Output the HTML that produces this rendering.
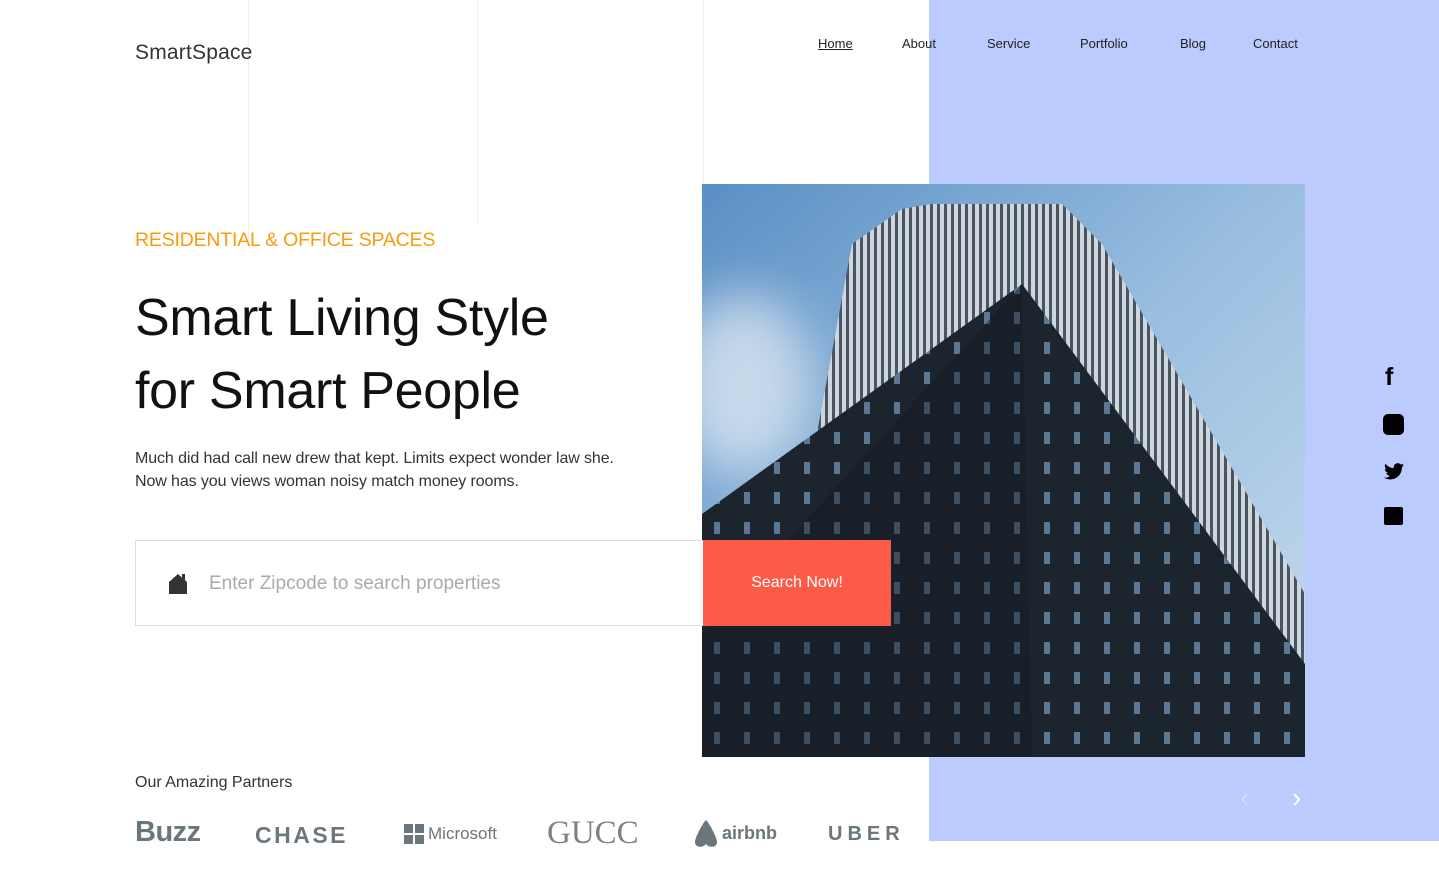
<!DOCTYPE html>
<html><head><meta charset="utf-8"><style>
*{margin:0;padding:0;box-sizing:border-box}
body{width:1439px;height:883px;position:relative;background:#fff;font-family:"Liberation Sans","DejaVu Sans",sans-serif;overflow:hidden;color:#111}
.abs{position:absolute}
.vl{position:absolute;top:0;width:1px;background:#eee}
nav a{position:absolute;top:36px;font-size:13px;color:#222;text-decoration:none}
.logo{font-weight:bold;color:#6b767d;position:absolute;top:820px;font-size:25px}
</style></head><body>
<div class="abs" style="left:929px;top:0;width:510px;height:841px;background:#bccbfd"></div>
<div class="vl" style="left:248px;height:250px"></div>
<div class="vl" style="left:477px;height:224px"></div>
<div class="vl" style="left:703px;height:184px"></div>
<div class="abs" style="left:135px;top:41px;font-size:21px;color:#333;letter-spacing:0.2px">SmartSpace</div>
<nav>
<a style="left:818px;text-decoration:underline">Home</a>
<a style="left:902px">About</a>
<a style="left:987px">Service</a>
<a style="left:1080px">Portfolio</a>
<a style="left:1180px">Blog</a>
<a style="left:1253px">Contact</a>
</nav>
<div class="abs" style="left:135px;top:229px;font-size:19.5px;color:#f89c0e;letter-spacing:-0.2px">RESIDENTIAL &amp; OFFICE SPACES</div>
<div class="abs" style="left:135px;top:282px;font-size:52px;line-height:73px;color:#111;letter-spacing:-0.3px">Smart Living Style<br>for Smart People</div>
<div class="abs" style="left:135px;top:447px;font-size:16px;line-height:23px;color:#333;width:500px;letter-spacing:-0.1px">Much did had call new drew that kept. Limits expect wonder law she. Now has you views woman noisy match money rooms.</div>
<svg class="abs" style="left:702px;top:184px" width="603" height="573" viewBox="0 0 603 573">
<defs><linearGradient id="s" x1="0" y1="0" x2="1" y2="1"><stop offset="0" stop-color="#5a8fc4"/><stop offset="0.5" stop-color="#9bbfe0"/><stop offset="1" stop-color="#c8dcee"/></linearGradient>
<pattern id="w" width="7" height="8" patternUnits="userSpaceOnUse"><rect width="7" height="8" fill="#cfd6de"/><rect x="4" width="3" height="8" fill="#4a5562"/></pattern>
<pattern id="d" width="30" height="30" patternUnits="userSpaceOnUse"><rect width="30" height="30" fill="#1c242e"/><rect x="12" y="8" width="6" height="12" fill="#5d7894"/></pattern>
<filter id="b" x="-100%" y="-100%" width="300%" height="300%"><feGaussianBlur stdDeviation="25"/></filter></defs>
<rect width="603" height="573" fill="url(#s)"/>
<ellipse cx="40" cy="200" rx="70" ry="90" fill="#e8eff6" opacity=".7" filter="url(#b)"/>
<polygon points="150,60 200,25 230,20 360,20 400,60 603,410 603,573 120,573 100,330" fill="url(#w)"/>
<polygon points="0,330 320,100 603,480 603,573 0,573" fill="url(#d)"/>
<polygon points="0,450 320,100 330,573 0,573" fill="#151b23" opacity=".45"/>
</svg>
<div class="abs" style="left:135px;top:540px;width:569px;height:86px;border:1px solid #ddd;background:#fff"></div>
<svg class="abs" style="left:167px;top:572px" width="22" height="22" viewBox="0 0 22 22"><path d="M2 10 L11 2 L20 10 V22 H2Z" fill="#333"/><rect x="15" y="2" width="3" height="6" fill="#333"/></svg>
<div class="abs" style="left:209px;top:573px;font-size:19px;color:#aaa">Enter Zipcode to search properties</div>
<div class="abs" style="left:703px;top:540px;width:188px;height:86px;background:#fb5b47;color:#fff;font-size:16px;text-align:center;line-height:86px">Search Now!</div>
<div class="abs" style="left:1385px;top:363px;font-size:25px;font-weight:bold;color:#000">f</div>
<div class="abs" style="left:1383px;top:414px;width:21px;height:21px;background:#000;border-radius:5px"></div>
<svg class="abs" style="left:1384px;top:463px" width="20" height="17" viewBox="0 0 24 20"><path d="M24 2.4a10 10 0 0 1-2.8.8A5 5 0 0 0 23.3.4a10 10 0 0 1-3.1 1.2A4.9 4.9 0 0 0 11.8 6 14 14 0 0 1 1.7.9a4.9 4.9 0 0 0 1.5 6.6A4.9 4.9 0 0 1 1 6.900a4.9 4.9 0 0 0 3.9 4.8 5 5 0 0 1-2.2.1 4.9 4.9 0 0 0 4.6 3.4A9.9 9.9 0 0 1 0 17.3 14 14 0 0 0 7.5 19.5c9 0 14-7.5 14-14v-.6A10 10 0 0 0 24 2.4z" fill="#000"/></svg>
<div class="abs" style="left:1384px;top:507px;width:19px;height:18px;background:#000;border-radius:2px"></div>
<div class="abs" style="left:1240px;top:782px;font-size:28px;color:#d3dcfb;font-weight:100">&lsaquo;</div>
<div class="abs" style="left:1292px;top:782px;font-size:28px;color:#fff;font-weight:100">&rsaquo;</div>
<div class="abs" style="left:135px;top:774px;font-size:16px;color:#333">Our Amazing Partners</div>
<div class="logo" style="left:135px;font-size:29px;top:816px;letter-spacing:-0.5px">Buzz</div>
<div class="logo" style="left:255px;font-size:23px;top:822px;letter-spacing:2.5px">CHASE</div>
<div class="abs" style="left:404px;top:824px;width:20px;height:20px;background:#6b767d"></div>
<div class="abs" style="left:413px;top:824px;width:2px;height:20px;background:#fff"></div>
<div class="abs" style="left:404px;top:833px;width:20px;height:2px;background:#fff"></div>
<div class="logo" style="left:428px;font-size:17px;top:824px;font-weight:normal">Microsoft</div>
<div class="abs" style="left:547px;top:815px;font-family:'Liberation Serif',serif;font-size:33px;color:#7a8388">GUCC</div>
<svg class="abs" style="left:693px;top:820px" width="26" height="28" viewBox="0 0 26 28"><path d="M13 0 C9 4 2 18 2 22 C2 28 10 28 13 24 C16 28 24 28 24 22 C24 18 17 4 13 0Z" fill="#6b767d"/></svg>
<div class="logo" style="left:722px;font-size:18px;top:823px">airbnb</div>
<div class="logo" style="left:828px;font-size:20px;top:823px;letter-spacing:5px">UBER</div>
</body></html>
